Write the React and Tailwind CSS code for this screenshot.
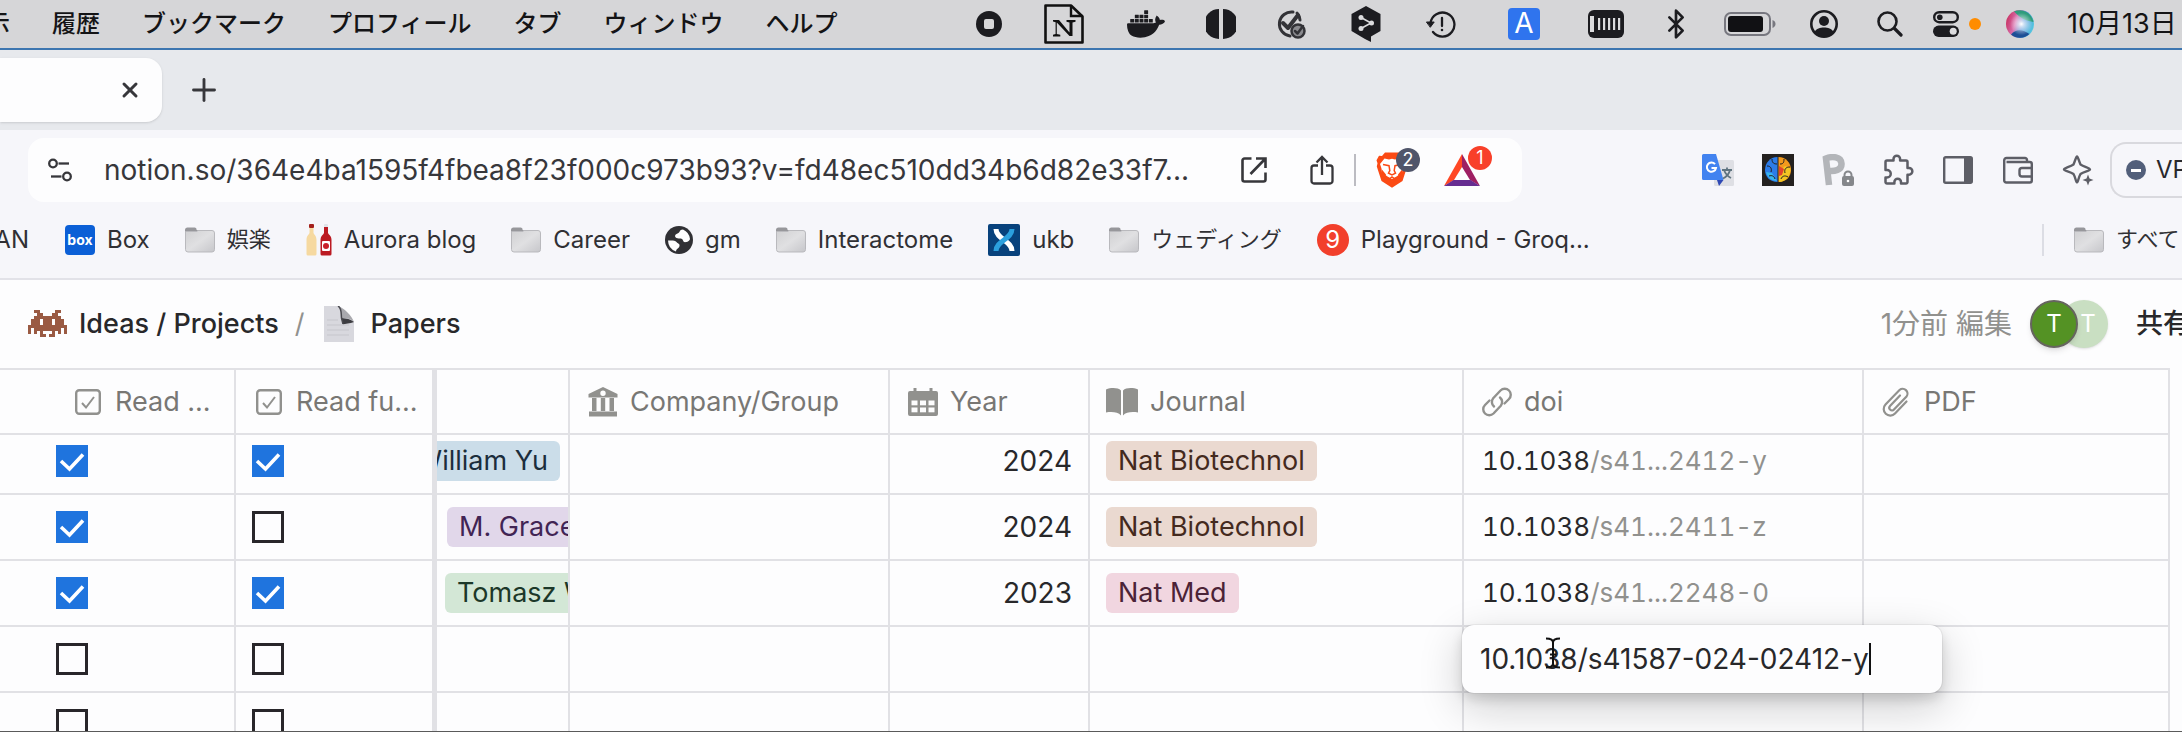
import React from "react";
import { SiDocker } from "react-icons/si";
import { Bluetooth, X, Plus } from "lucide-react";

/* ---------- menu bar ---------- */

function StopIcon() {
  return (
    <svg className="size-[26px]" viewBox="0 0 26 26" aria-hidden="true">
      <circle cx="13" cy="13" r="13" fill="#1c1c20" />
      <rect x="8" y="8" width="10" height="10" rx="2" fill="#d7d7d9" />
    </svg>
  );
}

function NotionDocIcon() {
  return (
    <svg className="h-10 w-10" viewBox="0 0 40 40" fill="none" aria-hidden="true">
      <path d="M1.5 1.5H27L38.5 12.5V38.500H1.500Z" stroke="#111" strokeWidth="2.600" strokeLinejoin="round" />
      <path d="M27 1.500V12H38.500" stroke="#111" strokeWidth="2.400" />
      <path d="M9 16h6l10.500 12.500V18.500l-3-.8V16h9v1.700l-3 .8V32h-3L12.800 18.500V30l3.500.8V32.500H9V30.800l2.600-.8V18.300L9 17.600Z" fill="#111" />
    </svg>
  );
}

function HalvesIcon() {
  return (
    <svg className="size-[30px]" viewBox="0 0 30 30" fill="#1c1c20" aria-hidden="true">
      <path d="M13 0A15 15 0 0 0 13 30Z" />
      <path d="M17 0A15 15 0 0 1 17 30Z" />
    </svg>
  );
}

function DoubleCheckIcon() {
  return (
    <svg className="size-8" viewBox="0 0 32 32" fill="none" stroke="#333337" strokeLinecap="round" strokeLinejoin="round" aria-hidden="true">
      <path d="M16 28A12 12 0 1 1 19 4" strokeWidth="3" />
      <path d="M23 5a12 12 0 0 1 3 7" strokeWidth="3" />
      <path d="M9 15l5 5L24 7" strokeWidth="4" />
      <circle cx="24" cy="23" r="6.500" fill="#8a8a8e" strokeWidth="2.500" />
      <path d="M21 23l2.500 2.500L29 18" strokeWidth="2.500" />
    </svg>
  );
}

function HexShareIcon() {
  return (
    <svg className="h-9 w-[30px]" viewBox="0 0 30 36" aria-hidden="true">
      <path d="M15 0L29.500 8V25L20 30.500V36L14 33L.5 25V8Z" fill="#1c1c20" />
      <path d="M10 11.500L20 17L10 22.500" stroke="#dcdcde" strokeWidth="1.600" fill="none" />
      <circle cx="10" cy="11.500" r="2.500" fill="#dcdcde" />
      <circle cx="20.500" cy="17" r="2.500" fill="#dcdcde" />
      <circle cx="10" cy="22.500" r="2.500" fill="#dcdcde" />
    </svg>
  );
}

function TimeMachineIcon() {
  return (
    <svg className="h-7 w-[30px]" viewBox="0 0 30 28" fill="none" stroke="#1c1c20" strokeWidth="2.300" strokeLinecap="round" aria-hidden="true">
      <path d="M4.500 13A12 12 0 1 1 7 22" />
      <path d="M.8 12h7.400l-3.700 5Z" fill="#1c1c20" strokeWidth="1" />
      <path d="M16 8v8" />
      <circle cx="16" cy="20" r=".6" fill="#1c1c20" strokeWidth="1.400" />
    </svg>
  );
}

function MemoryIcon() {
  return (
    <svg className="h-7 w-9" viewBox="0 0 36 28" aria-hidden="true">
      <rect width="36" height="28" rx="6" fill="#1c1c20" />
      <rect x="2" y="6" width="4" height="16" fill="#dcdcde" />
      {[10, 15, 20, 25, 30].map((x) => (
        <rect key={x} x={x} y="8" width="2.200" height="12" fill="#dcdcde" />
      ))}
    </svg>
  );
}

function BatteryIcon() {
  return (
    <svg className="h-6 w-[52px]" viewBox="0 0 52 24" aria-hidden="true">
      <rect x="1" y="1" width="45" height="22" rx="6" fill="none" stroke="#77777f" strokeWidth="2" />
      <rect x="4" y="4" width="35" height="16" rx="3" fill="#111114" />
      <path d="M48.500 8c2 .8 3 2.200 3 4s-1 3.200-3 4Z" fill="#77777f" />
    </svg>
  );
}

function UserIcon() {
  return (
    <svg className="size-7" viewBox="0 0 28 28" aria-hidden="true">
      <circle cx="14" cy="14" r="12.700" fill="none" stroke="#1c1c20" strokeWidth="2.600" />
      <circle cx="14" cy="11" r="5" fill="#1c1c20" />
      <path d="M4.500 22c2-3.500 5.500-4.500 9.500-4.500s7.500 1 9.500 4.500A12.500 12.500 0 0 1 4.500 22Z" fill="#1c1c20" />
    </svg>
  );
}

function SearchIcon() {
  return (
    <svg className="size-[26px]" viewBox="0 0 26 26" fill="none" stroke="#1c1c20" strokeLinecap="round" aria-hidden="true">
      <circle cx="10.500" cy="10.500" r="9" strokeWidth="2.600" />
      <path d="M17.500 17.500l6.500 6.500" strokeWidth="3.200" />
    </svg>
  );
}

function ControlIcon() {
  return (
    <svg className="size-[26px]" viewBox="0 0 26 26" aria-hidden="true">
      <rect x="1.200" y="1.200" width="23.600" height="10" rx="5" fill="none" stroke="#1c1c20" strokeWidth="2.400" />
      <circle cx="6.800" cy="6.200" r="2.800" fill="#1c1c20" />
      <rect y="14.500" width="26" height="11.500" rx="5.700" fill="#1c1c20" />
      <circle cx="20.200" cy="20.200" r="3.500" fill="#dcdcde" />
    </svg>
  );
}

function SiriIcon() {
  return (
    <svg className="size-7" viewBox="0 0 28 28" aria-hidden="true">
      <defs>
        <linearGradient id="orb" x1="0" y1=".3" x2="1" y2=".6">
          <stop offset="0" stopColor="#c8305f" />
          <stop offset=".35" stopColor="#d86fae" />
          <stop offset=".6" stopColor="#4f8fd8" />
          <stop offset="1" stopColor="#55c9e0" />
        </linearGradient>
        <radialGradient id="glow" cx=".55" cy=".5" r=".4">
          <stop offset="0" stopColor="#fff" />
          <stop offset=".25" stopColor="#fff" stopOpacity=".7" />
          <stop offset="1" stopColor="#fff" stopOpacity="0" />
        </radialGradient>
      </defs>
      <circle cx="14" cy="14" r="14" fill="url(#orb)" />
      <path d="M8 1.500A14 14 0 0 1 27.500 12C21 11 15 9 8 1.500Z" fill="#2f9c7c" />
      <path d="M5 24.500C11 18 17 20 23.500 24A14 14 0 0 1 5 24.500Z" fill="#1d4f96" />
      <circle cx="14" cy="14" r="14" fill="url(#glow)" />
    </svg>
  );
}

const menus = ["履歴", "ブックマーク", "プロフィール", "タブ", "ウィンドウ", "ヘルプ"];

function Slot({ className, label, children }) {
  return (
    <button type="button" aria-label={label} className={`flex h-full shrink-0 items-center justify-center ${className}`}>
      {children}
    </button>
  );
}

function MenuBar() {
  return (
    <header className="flex h-[50px] shrink-0 items-center overflow-hidden border-b-2 border-[#3d76b0] bg-[#d6d6d8] text-2xl font-medium text-[#141416]">
      <nav className="flex shrink-0 items-center gap-[42px]">
        <button type="button" className="flex w-2.5 justify-end whitespace-nowrap">示</button>
        {menus.map((m) => (
          <button type="button" key={m} className="whitespace-nowrap">{m}</button>
        ))}
      </nav>
      <div className="ml-auto flex h-full shrink-0 items-center">
        <Slot className="w-[76px]" label="停止"><StopIcon /></Slot>
        <Slot className="w-[74px]" label="Notion"><NotionDocIcon /></Slot>
        <Slot className="w-[90px]" label="Docker"><SiDocker className="size-[38px]" color="#1c1c20" /></Slot>
        <Slot className="w-[60px]" label="表示モード"><HalvesIcon /></Slot>
        <Slot className="w-[78px]" label="タスク"><DoubleCheckIcon /></Slot>
        <Slot className="w-[74px]" label="DeepL"><HexShareIcon /></Slot>
        <Slot className="w-[76px]" label="Time Machine"><TimeMachineIcon /></Slot>
        <Slot className="w-[90px]" label="入力ソース">
          <span className="flex size-8 items-center justify-center rounded bg-[#2f74ee] text-[28px] font-normal text-white">A</span>
        </Slot>
        <Slot className="w-[74px]" label="メモリ"><MemoryIcon /></Slot>
        <Slot className="w-[66px]" label="Bluetooth"><Bluetooth className="size-8" color="#1c1c20" strokeWidth={2} /></Slot>
        <Slot className="w-[82px]" label="バッテリー"><BatteryIcon /></Slot>
        <Slot className="w-[66px]" label="ユーザ"><UserIcon /></Slot>
        <Slot className="w-[66px]" label="検索"><SearchIcon /></Slot>
        <Slot className="w-[46px]" label="コントロールセンター"><ControlIcon /></Slot>
        <span className="size-3 rounded-full bg-[#ff8c00]" />
        <Slot className="w-[78px]" label="Siri"><SiriIcon /></Slot>
        <time className="w-[123px] pl-2 text-[27px] font-normal whitespace-nowrap">10月13日</time>
      </div>
    </header>
  );
}

/* ---------- browser chrome ---------- */

function TabStrip() {
  return (
    <div className="flex h-20 shrink-0 items-center bg-[#e7e9ed] text-[#37373b]">
      <div className="flex h-16 w-[162px] items-center justify-end rounded-r-2xl bg-[#fdfdfe] pr-5 shadow-sm">
        <button type="button" aria-label="タブを閉じる"><X className="size-6" strokeWidth={3} /></button>
      </div>
      <button type="button" aria-label="新しいタブ" className="ml-6"><Plus className="size-9" strokeWidth={1.9} /></button>
    </div>
  );
}

function TuneIcon() {
  return (
    <svg className="h-6 w-6" viewBox="0 0 24 24" fill="none" stroke="#37373b" strokeWidth="2.300" aria-hidden="true">
      <circle cx="5" cy="5.500" r="3.800" />
      <path d="M10.500 5.500H21" />
      <circle cx="19" cy="18.500" r="3.800" />
      <path d="M3 18.500h10.500" />
    </svg>
  );
}

function OpenIcon() {
  return (
    <svg className="size-[26px]" viewBox="0 0 26 26" fill="none" stroke="#37373b" strokeWidth="2.600" aria-hidden="true">
      <path d="M10.500 1.500H3.500a2 2 0 0 0-2 2v19a2 2 0 0 0 2 2h19a2 2 0 0 0 2-2V15.500" />
      <path d="M15 1.500h9.500V11M24 2L9.500 17" />
    </svg>
  );
}

function ShareIcon() {
  return (
    <svg className="h-[30px] w-6" viewBox="0 0 24 30" fill="none" stroke="#37373b" strokeWidth="2.300" aria-hidden="true">
      <path d="M8 10.500H4a2.500 2.500 0 0 0-2.500 2.500V26A2.500 2.500 0 0 0 4 28.500h16a2.500 2.500 0 0 0 2.500-2.500V13a2.500 2.500 0 0 0-2.500-2.500h-4" />
      <path d="M12 20V2.500M6.500 7.500L12 2l5.500 5.500" />
    </svg>
  );
}

function LionIcon() {
  return (
    <svg className="h-9 w-8" viewBox="0 0 32 36" aria-hidden="true">
      <path d="M9 .5H23L26 4l3-.3 2.500 4.500-1 3 .7 3.300L26.500 29 16 35.700 5.500 29 .8 14.500l.7-3.300-1-3L3 3.700 6 4Z" fill="#fb4a14" />
      <path d="M8.500 6.500L13 7.500 16 6.800 19 7.500l4.500-1L28 12l-1.500 4.500.3 3.500-6.300 4.500L16 27l-4.500-2.500L5.200 20l.3-3.500L4 12Z" fill="#fff" />
      <path d="M7 12.500l6 1.200.8 5-1.300 2.500L16 23l3.500-1.800-1.300-2.500.8-5 6-1.200M12.500 27.500L16 25l3.500 2.500L16 30Z" stroke="#fb4a14" strokeWidth="1.500" fill="none" />
      <path d="M5.500 17l4.500 5.500-1.500 4-3.500-6ZM26.500 17L22 22.500l1.500 4 3.500-6Z" fill="#fb4a14" />
    </svg>
  );
}

function TriangleIcon() {
  return (
    <svg className="h-8 w-9" viewBox="0 0 36 32" aria-hidden="true">
      <path d="M18 0L0 32L10 26L18 13Z" fill="#ff4724" />
      <path d="M18 0L36 32L26 26L18 13Z" fill="#9e1f63" />
      <path d="M0 32H36L26.500 26H9.500Z" fill="#662d91" />
    </svg>
  );
}

function TranslateIcon() {
  return (
    <svg className="size-8" viewBox="0 0 32 32" aria-hidden="true">
      <rect x="12" y="6" width="20" height="26" rx="1.500" fill="#dedfe4" />
      <path d="M20 16h10M25 13.500v2.500M28 16c-1 4-4 7-7 8.500M22 16c1.500 4 4 6.500 7 8" stroke="#5f7480" strokeWidth="1.800" fill="none" />
      <path d="M1.500 0H14l7.500 26H1.500A1.500 1.500 0 0 1 0 24.500v-23A1.500 1.500 0 0 1 1.500 0Z" fill="#4283f0" />
      <path d="M15 26h6.500L17 32Z" fill="#2f49b5" />
      <path d="M13 10.200A4.600 4.600 0 1 0 14 14H9.500" stroke="#fff" strokeWidth="2" fill="none" />
    </svg>
  );
}

function BrainIcon() {
  return (
    <svg className="size-8" viewBox="0 0 32 32" aria-hidden="true">
      <rect width="32" height="32" fill="#24211f" />
      <path d="M15.500 3C8 3 3 9 3 16s5 12 12.500 12Z" fill="#2d7ce8" />
      <path d="M16.500 3C24 3 29 9 29 16s-5 12-12.500 12Z" fill="#f39a1d" />
      <path d="M17 18l6-6 5.500 2C29 21 24 28 17 28Z" fill="#f3c623" />
      <path d="M17 12l5 3-2 6-3 1Z" fill="#e4432c" />
      <path d="M4 18l6 1 5 8C9 27 5 23 4 18Z" fill="#37b6ef" />
      <path d="M5 12c4 0 5 3 4 6M10 5c0 4 2 5 5 5M7 22c3-1 5 0 6 3M22 5c0 4-1 5-4 5M28 13c-4 0-6 2-5 6M26 23c-3-2-6-1-7 2" stroke="#24211f" strokeWidth="1" fill="none" />
    </svg>
  );
}

function LockedPIcon() {
  return (
    <svg className="size-8" viewBox="0 0 32 32" fill="none" aria-hidden="true">
      <path d="M7 31L4 4.500C10 2 19 2.500 19.500 9.500S12 17.500 7 17" stroke="#b3b5b9" strokeWidth="6.500" />
      <rect x="20" y="22" width="12" height="10" rx="2" fill="#85878b" />
      <path d="M22.500 23v-2a3.500 3.500 0 0 1 7 0v2" stroke="#85878b" strokeWidth="2" />
      <circle cx="26" cy="27" r="1.300" fill="#fff" />
    </svg>
  );
}

function PuzzleIcon() {
  return (
    <svg className="size-8" viewBox="0 0 32 32" fill="none" stroke="#5d5e66" strokeWidth="2.500" strokeLinejoin="round" aria-hidden="true">
      <path d="M5 6.500h6.500V5a3.300 3.300 0 0 1 6.600 0v1.500H24a1.500 1.500 0 0 1 1.500 1.500V14H27a3.300 3.300 0 0 1 0 6.700h-1.500V28a1.500 1.500 0 0 1-1.500 1.500H19V28a3.300 3.300 0 0 0-6.600 0v1.500H5A1.500 1.500 0 0 1 3.500 28V23.500H5a3.300 3.300 0 0 0 0-7.500H3.500V8A1.500 1.500 0 0 1 5 6.500Z" />
    </svg>
  );
}

function SidePanelIcon() {
  return (
    <svg className="size-8" viewBox="0 0 32 32" aria-hidden="true">
      <rect x="2.200" y="3.200" width="27.600" height="25.600" rx="1.500" fill="none" stroke="#5d5e66" strokeWidth="2.400" />
      <path d="M22 3h8v26h-8Z" fill="#5d5e66" />
    </svg>
  );
}

function WalletIcon() {
  return (
    <svg className="size-8" viewBox="0 0 32 32" fill="none" stroke="#5d5e66" strokeWidth="2.400" strokeLinejoin="round" aria-hidden="true">
      <path d="M25 8V6a2 2 0 0 0-2-2H4.500a2.300 2.300 0 0 0-2.300 2.300V26.500a2 2 0 0 0 2 2h23.600a2 2 0 0 0 2-2V10a2 2 0 0 0-2-2H4.500" />
      <path d="M30 14H20a2.500 2.500 0 0 0-2.500 2.500v3.500A2.500 2.500 0 0 0 20 22.500H30" />
    </svg>
  );
}

function SparkleIcon() {
  return (
    <svg className="size-8" viewBox="0 0 32 32" fill="none" aria-hidden="true">
      <path d="M15 2.500C16 2.500 16.800 7 18.500 10.500 22.500 13 28 14 28 15.500S22 17.500 18.500 20C16.500 23.500 16 28.500 15 28.500S13.500 23.500 11.500 20C8 17.500 2 17 2 15.500S8 13 11.500 10.500C13.200 7 14 2.500 15 2.500Z" stroke="#5d5e66" strokeWidth="2.400" strokeLinejoin="round" />
      <path d="M26 20.500l1.500 4 4 1.500-4 1.500-1.500 4-1.500-4-4-1.500 4-1.500Z" fill="#5d5e66" />
    </svg>
  );
}

const extensions = [
  ["翻訳", TranslateIcon],
  ["Brain", BrainIcon],
  ["Paperpile", LockedPIcon],
  ["拡張機能", PuzzleIcon],
  ["サイドバー", SidePanelIcon],
  ["ウォレット", WalletIcon],
  ["Leo AI", SparkleIcon],
];

function Toolbar() {
  return (
    <div className="flex items-center pt-2 pl-7">
      <div className="flex h-16 min-w-0 flex-1 items-center rounded-2xl bg-[#fdfdfe] pr-[42px] pl-5 text-[#37373b]">
        <button type="button" aria-label="サイト情報"><TuneIcon /></button>
        <input
          type="text"
          aria-label="アドレス"
          defaultValue="notion.so/364e4ba1595f4fbea8f23f000c973b93?v=fd48ec510dd34b6d82e33f7..."
          className="ml-8 min-w-0 flex-1 bg-transparent text-[28px] outline-none"
        />
        <div className="ml-5 flex items-center">
          <button type="button" aria-label="新しいウィンドウで開く"><OpenIcon /></button>
          <button type="button" aria-label="共有" className="ml-[43px]"><ShareIcon /></button>
          <span className="ml-5 h-8 w-0.5 bg-[#bcbcc2]" />
          <button type="button" aria-label="Brave Shields" className="relative ml-5">
            <LionIcon />
            <span className="absolute -top-1 left-5 flex size-6 items-center justify-center rounded-full bg-[#50556a] text-lg text-white">2</span>
          </button>
          <button type="button" aria-label="Rewards" className="relative ml-9">
            <TriangleIcon />
            <span className="absolute -top-2 left-6 flex size-6 items-center justify-center rounded-full bg-[#f8402a] text-lg text-white">1</span>
          </button>
        </div>
      </div>
      <div className="ml-[180px] flex shrink-0 items-center gap-7">
        {extensions.map(([label, Icon]) => (
          <button type="button" key={label} aria-label={label}><Icon /></button>
        ))}
      </div>
      <button
        type="button"
        className="ml-4 flex h-14 w-[72px] shrink-0 items-center gap-2.5 overflow-hidden rounded-l-2xl border-2 border-r-0 border-[#d9d9de] pl-3.5 text-2xl whitespace-nowrap text-[#28282c]"
      >
        <span className="flex size-5 shrink-0 items-center justify-center rounded-full bg-[#525f7a]">
          <span className="h-[3px] w-2.5 bg-white" />
        </span>
        VPN
      </button>
    </div>
  );
}

function FolderIcon() {
  return (
    <svg className="h-[26px] w-[30px]" viewBox="0 0 30 26" aria-hidden="true">
      <defs>
        <linearGradient id="folder" x1="0" y1="0" x2="1" y2="1">
          <stop offset="0" stopColor="#d0d0d2" />
          <stop offset=".5" stopColor="#e0e0e2" />
          <stop offset="1" stopColor="#c6c6ca" />
        </linearGradient>
      </defs>
      <path d="M0 3a2.500 2.500 0 0 1 2.500-2.500h7A2 2 0 0 1 11.500 3H27V10H0Z" fill="#97979b" />
      <path d="M.5 4.500H11.500L13 3.500H27A2.500 2.500 0 0 1 29.500 6V22.500A2.500 2.500 0 0 1 27 25H3A2.500 2.500 0 0 1 .5 22.500Z" fill="url(#folder)" stroke="#b9b9bd" strokeWidth="1" />
    </svg>
  );
}

function BoxIcon() {
  return (
    <span className="flex h-[30px] w-[30px] items-center justify-center rounded bg-[#0b5fd6] text-sm font-bold text-white" aria-hidden="true">
      box
    </span>
  );
}

function BottlesIcon() {
  return (
    <svg className="h-8 w-[26px]" viewBox="0 0 26 32" aria-hidden="true">
      <path d="M3.500 3h4v6c1 2 3 3 3 7V30a1.500 1.500 0 0 1-1.500 1.500H2A1.500 1.500 0 0 1 .5 30V16c0-4 2-5 3-7Z" fill="#f6d9a0" />
      <rect x="3" y="0" width="5" height="4" rx="1" fill="#a3201c" />
      <path d="M18 3h4v6c1 2 3.500 3 3.500 7V30a1.500 1.500 0 0 1-1.500 1.500h-8a1.500 1.500 0 0 1-1.500-1.500V16c0-4 2.500-5 3.500-7Z" fill="#bb1a22" />
      <rect x="18" y="0" width="4" height="3" rx="1" fill="#dfe3e8" />
      <rect x="16" y="17" width="8" height="10" rx="1" fill="#fff" />
      <circle cx="20" cy="22" r="3" fill="#c9202a" />
    </svg>
  );
}

function GlobeIcon() {
  return (
    <svg className="size-7" viewBox="0 0 28 28" aria-hidden="true">
      <circle cx="14" cy="14" r="14" fill="#303034" />
      <path d="M18 3.500c-4 0-2.500 3-5.500 4s-3 3.500-1 4.500 5-.5 6 1.500 1 3 4 2.500 3.500-3 3.500-3A12 12 0 0 0 18 3.500Z" fill="#fdfdfe" />
      <path d="M3 14.500c3 0 7-.5 8.500 1.500s3.500 1.500 3 4-3 2-3.500 5.500A12 12 0 0 1 3 14.500Z" fill="#fdfdfe" />
    </svg>
  );
}

function UkbIcon() {
  return (
    <svg className="size-8" viewBox="0 0 32 32" fill="none" aria-hidden="true">
      <rect width="32" height="32" rx="2" fill="#08427c" />
      <path d="M8 5C8 15 24 17 24 27" stroke="#fff" strokeWidth="5" />
      <path d="M24 5C24 15 8 17 8 27" stroke="#2ba0de" strokeWidth="5" />
    </svg>
  );
}

function NineIcon() {
  return (
    <span className="flex size-8 items-center justify-center rounded-full bg-[#f23f2b] text-2xl text-white" aria-hidden="true">9</span>
  );
}

const bookmarks = [
  [BoxIcon, "Box", ""],
  [FolderIcon, "娯楽", "text-[22px]"],
  [BottlesIcon, "Aurora blog", ""],
  [FolderIcon, "Career", ""],
  [GlobeIcon, "gm", ""],
  [FolderIcon, "Interactome", ""],
  [UkbIcon, "ukb", ""],
  [FolderIcon, "ウェディング", "text-[22px]"],
  [NineIcon, "Playground - Groq...", ""],
];

function Bookmarks() {
  return (
    <nav className="flex h-[76px] items-center overflow-hidden text-2xl text-[#303034]">
      <a href="#an" className="mr-9 flex w-[29px] shrink-0 justify-end whitespace-nowrap">AN</a>
      <div className="flex shrink-0 items-center gap-[35px]">
        {bookmarks.map(([Icon, label, size]) => (
          <a href="#bookmark" key={label} className={`flex items-center gap-3 whitespace-nowrap ${size}`}>
            <Icon />
            {label}
          </a>
        ))}
      </div>
      <a
        href="#all"
        className="ml-auto flex h-8 w-[140px] shrink-0 items-center gap-3 border-l-2 border-[#dcdde4] pl-[30px] text-[22px] whitespace-nowrap"
      >
        <span className="shrink-0"><FolderIcon /></span>
        すべて
      </a>
    </nav>
  );
}

/* ---------- page ---------- */

const invaderRows = [
  "..##.....##..",
  "...##...##...",
  "..#########..",
  ".###.###.###.",
  ".###.###.###.",
  "#############",
  "#.#########.#",
  "#.#.#...#.#.#",
  "....##.##....",
];

function InvaderIcon() {
  return (
    <svg className="h-7 w-[39px]" viewBox="0 0 39 28" shapeRendering="crispEdges" aria-hidden="true">
      {invaderRows.flatMap((row, y) =>
        [...row].map((c, x) =>
          c === "#" ? <rect key={`${x}-${y}`} x={x * 3} y={y * 3} width="3" height="3" fill="#9a5a43" /> : null
        )
      )}
    </svg>
  );
}

function PageIcon() {
  return (
    <svg className="h-9 w-[30px]" viewBox="0 0 30 36" aria-hidden="true">
      <path d="M0 0H14L30 16V36H0Z" fill="#d8d8de" />
      <path d="M14 0C18 2 17 8 17.500 12c4 0 9 0 12.500 4C28 10 20 2 14 0Z" fill="#a9a9ae" />
      <path d="M17.500 12c5 .5 9 1 12.500 4-4 1.500-9 1.500-11 3Z" fill="#3d3d42" />
      <path d="M14 0C18 2 17 8 17.500 12L19 18" stroke="#4a4a50" strokeWidth="1.500" fill="none" />
      <path d="M3 14h11M3 19h22M3 24h22M3 29h22" stroke="#cbcbd2" strokeWidth="1.500" />
    </svg>
  );
}

function PageHeader() {
  return (
    <div className="flex h-[88px] shrink-0 items-center overflow-hidden text-[27px] text-[#28282a]">
      <nav className="flex items-center pl-7">
        <a href="#ideas" className="flex items-center gap-3 font-medium"><InvaderIcon />Ideas / Projects</a>
        <span className="mx-4 text-[#91918e]">/</span>
        <a href="#papers" className="ml-1 flex items-center gap-4 font-medium"><PageIcon />Papers</a>
      </nav>
      <div className="ml-auto flex shrink-0 items-center">
        <span className="text-[28px] text-[#91918e]">1分前 編集</span>
        <span className="ml-[18px] flex items-center">
          <span className="z-10 flex size-12 items-center justify-center rounded-full border-2 border-[#66655f] bg-[#549224] text-2xl text-white shadow-md">T</span>
          <span className="-ml-[18px] flex size-12 items-center justify-center rounded-full bg-[#c9dfc2] pl-2 text-2xl text-white shadow-sm">T</span>
        </span>
        <button type="button" className="ml-7 w-[46px] overflow-hidden text-left font-medium whitespace-nowrap">共有</button>
      </div>
    </div>
  );
}

function CheckPropIcon() {
  return (
    <svg className="size-[26px]" viewBox="0 0 26 26" fill="none" stroke="#91918e" aria-hidden="true">
      <rect x="1.200" y="1.200" width="23.600" height="23.600" rx="3" strokeWidth="2.400" />
      <path d="M7 14l4 4.500L19 8" strokeWidth="2" />
    </svg>
  );
}

function BankIcon() {
  return (
    <svg className="size-[30px]" viewBox="0 0 30 30" fill="#91918e" aria-hidden="true">
      <path fillRule="evenodd" d="M15 0L29.500 7V10.500H.5V7ZM15 3.500a2.700 2.700 0 1 0 0 5.400 2.700 2.700 0 0 0 0-5.400Z" />
      <path d="M4 11h4.500V24H4ZM12.800 11h4.400V24h-4.400ZM21.500 11H26V24h-4.500ZM1 24.500H29V29.500H1Z" />
    </svg>
  );
}

function CalendarIcon() {
  return (
    <svg className="h-7 w-[30px]" viewBox="0 0 30 28" aria-hidden="true">
      <path d="M5.500 0h3v3h13V0h3v3H28a2 2 0 0 1 2 2V26a2 2 0 0 1-2 2H2a2 2 0 0 1-2-2V5a2 2 0 0 1 2-2h3.500Z" fill="#91918e" />
      {[3.5, 12, 20.500].map((x) =>
        [12.500, 19.500].map((y) => <rect key={`${x}-${y}`} x={x} y={y} width="6" height="4.800" fill="#fdfdfe" />)
      )}
    </svg>
  );
}

function BookIcon() {
  return (
    <svg className="h-7 w-8" viewBox="0 0 32 28" fill="#91918e" aria-hidden="true">
      <path d="M0 1.500C5-.5 12-.5 15 2.500V27.500C12 24 6 23.500 0 24.500Z" />
      <path d="M32 1.500C27-.5 20-.5 17 2.500V27.500C20 24 26 23.500 32 24.500Z" />
    </svg>
  );
}

function LinkIcon() {
  return (
    <svg className="size-[30px]" viewBox="0 0 30 30" fill="none" stroke="#91918e" strokeWidth="2.400" strokeLinecap="round" aria-hidden="true">
      <path d="M12 19.500a6 6 0 0 1-.8-8.300L18.500 3.500a6 6 0 0 1 8.500 8.500L22.500 16.500" />
      <path d="M18 10.500a6 6 0 0 1 .8 8.300L11.500 26.500a6 6 0 0 1-8.500-8.500L7.500 13.500" />
    </svg>
  );
}

function ClipIcon() {
  return (
    <svg className="h-[30px] w-7" viewBox="0 0 28 30" fill="none" stroke="#91918e" strokeWidth="2.200" strokeLinecap="round" aria-hidden="true">
      <path d="M24.500 14.500L13 26.500a6.500 6.500 0 0 1-9.500-9L17.500 3a4.800 4.800 0 0 1 7 6.500L12 22.500a2.600 2.600 0 0 1-4-3.500L18 8.500" />
    </svg>
  );
}

const columns = [
  { id: "read", label: "Read ...", Icon: CheckPropIcon, pad: "pl-[75px] gap-3.5" },
  { id: "full", label: "Read fu...", Icon: CheckPropIcon, pad: "pl-5 gap-3.5" },
  { id: "author", label: "" },
  { id: "company", label: "Company/Group", Icon: BankIcon, pad: "pl-[18px] gap-3" },
  { id: "year", label: "Year", Icon: CalendarIcon, pad: "pl-[18px] gap-3" },
  { id: "journal", label: "Journal", Icon: BookIcon, pad: "pl-4 gap-3" },
  { id: "doi", label: "doi", Icon: LinkIcon, pad: "pl-[18px] gap-3" },
  { id: "pdf", label: "PDF", Icon: ClipIcon, pad: "pl-[18px] gap-3.5" },
];

const rows = [
  {
    read: true, full: true,
    author: { name: "William Yu", tone: "bg-[#cbdde9] text-[#1b2d3c]", place: "justify-end pr-2" },
    year: "2024", journal: "Nat Biotechnol", jtone: "bg-[#ead9d0] text-[#442a1e]", doi: "/s41...2412-y",
  },
  {
    read: true, full: false,
    author: { name: "M. Grace", tone: "bg-[#e1d7ea] text-[#412454]", place: "pl-2.5" },
    year: "2024", journal: "Nat Biotechnol", jtone: "bg-[#ead9d0] text-[#442a1e]", doi: "/s41...2411-z",
  },
  {
    read: true, full: true,
    author: { name: "Tomasz W", tone: "bg-[#d3e7d6] text-[#1c3829]", place: "pl-2" },
    year: "2023", journal: "Nat Med", jtone: "bg-[#f1d6e0] text-[#4c2337]", doi: "/s41...2248-0",
  },
  { read: false, full: false, editing: true },
  { read: false, full: false },
];

const cell = "border-r-2 border-b-2 border-[#e1e1e5] p-0";

function Check({ checked, label }) {
  return (
    <label className="grid size-8 place-items-center">
      <input
        type="checkbox"
        aria-label={label}
        defaultChecked={checked}
        className="col-start-1 row-start-1 size-8 appearance-none border-3 border-[#28262a] checked:border-0 checked:bg-[#1f74de]"
      />
      {checked && (
        <svg className="pointer-events-none col-start-1 row-start-1 size-8" viewBox="0 0 32 32" aria-hidden="true">
          <path d="M5 16l8.500 8L27 9.500" fill="none" stroke="#fff" strokeWidth="3.600" />
        </svg>
      )}
    </label>
  );
}

function Tag({ tone, children }) {
  return (
    <span className={`inline-flex h-10 shrink-0 items-center rounded-md px-3 text-[27px] whitespace-nowrap ${tone}`}>{children}</span>
  );
}

function IBeam() {
  return (
    <svg className="pointer-events-none absolute top-3 left-[84px] h-8 w-[14px]" viewBox="0 0 14 32" fill="none" aria-hidden="true">
      <path d="M0 1.500c4 0 7 1.500 7 4 0-2.500 3-4 7-4M7 5v22M0 30.500c4 0 7-1.500 7-4 0 2.500 3 4 7 4M4 17.500h6" stroke="#111" strokeWidth="2" />
    </svg>
  );
}

function CellEditor() {
  return (
    <div className="absolute -top-0.5 -left-0.5 z-20 flex h-[68px] w-[480px] items-center rounded-xl bg-[#fdfdfe] pl-[18px] shadow-[0_0_0_1px_rgba(15,15,15,0.05),0_6px_12px_rgba(15,15,15,0.14),0_14px_44px_rgba(15,15,15,0.2)]">
      <input
        type="text"
        aria-label="doi"
        defaultValue="10.1038/s41587-024-02412-y"
        className="field-sizing-content bg-transparent outline-none"
      />
      <span className="h-8 w-0.5 bg-[#111]" />
      <IBeam />
    </div>
  );
}

function PapersTable() {
  return (
    <div className="pr-3">
      <table className="w-full table-fixed border-separate border-spacing-0 border-t-2 border-[#e1e1e5] text-[28px] leading-9 text-[#28282a]">
        <colgroup>
          <col className="w-[236px]" />
          <col className="w-[201px]" />
          <col className="w-[133px]" />
          <col className="w-[320px]" />
          <col className="w-[200px]" />
          <col className="w-[374px]" />
          <col className="w-[400px]" />
          <col />
        </colgroup>
        <thead>
          <tr className="h-[65px] text-[27px] text-[#787774]">
            {columns.map(({ id, label, Icon, pad }) => (
              <th key={id} scope="col" className={`${cell} font-normal ${id === "full" ? "border-r-5" : ""}`}>
                {Icon && (
                  <span className={`flex items-center whitespace-nowrap ${pad}`}>
                    <Icon />
                    {label}
                  </span>
                )}
              </th>
            ))}
          </tr>
        </thead>
        <tbody>
          {rows.map((row, i) => {
            const base = i === 0 ? `${cell} h-[60px] pb-1.5` : `${cell} h-[66px]`;
            return (
              <tr key={i}>
                <td className={base}>
                  <div className="pl-14"><Check checked={row.read} label={`Read ${i + 1}`} /></div>
                </td>
                <td className={`${base} border-r-5`}>
                  <div className="pl-4"><Check checked={row.full} label={`Read full ${i + 1}`} /></div>
                </td>
                <td className={base}>
                  {row.author && (
                    <div className={`flex overflow-hidden ${row.author.place}`}>
                      <Tag tone={row.author.tone}>{row.author.name}</Tag>
                    </div>
                  )}
                </td>
                <td className={base} />
                <td className={`${base} text-right`}>{row.year && <span className="pr-4">{row.year}</span>}</td>
                <td className={base}>
                  {row.journal && <div className="flex pl-4"><Tag tone={row.jtone}>{row.journal}</Tag></div>}
                </td>
                <td className={`${base} relative`}>
                  {row.doi && (
                    <div className="pl-[18px] text-[26px] whitespace-nowrap tabular-nums">
                      10.1038<span className="text-[#91918e]">{row.doi}</span>
                    </div>
                  )}
                  {row.editing && <CellEditor />}
                </td>
                <td className={base} />
              </tr>
            );
          })}
        </tbody>
      </table>
    </div>
  );
}

export default function App() {
  return (
    <div className="flex h-screen flex-col overflow-hidden border-b border-[#5a5a5a] bg-[#fdfdfe] font-['Inter','Noto_Sans_CJK_JP',sans-serif]">
      <MenuBar />
      <TabStrip />
      <div className="shrink-0 border-b-2 border-[#e2e2e8] bg-[#f6f6fa]">
        <Toolbar />
        <Bookmarks />
      </div>
      <PageHeader />
      <main className="min-h-0 flex-1 overflow-hidden">
        <PapersTable />
      </main>
    </div>
  );
}
